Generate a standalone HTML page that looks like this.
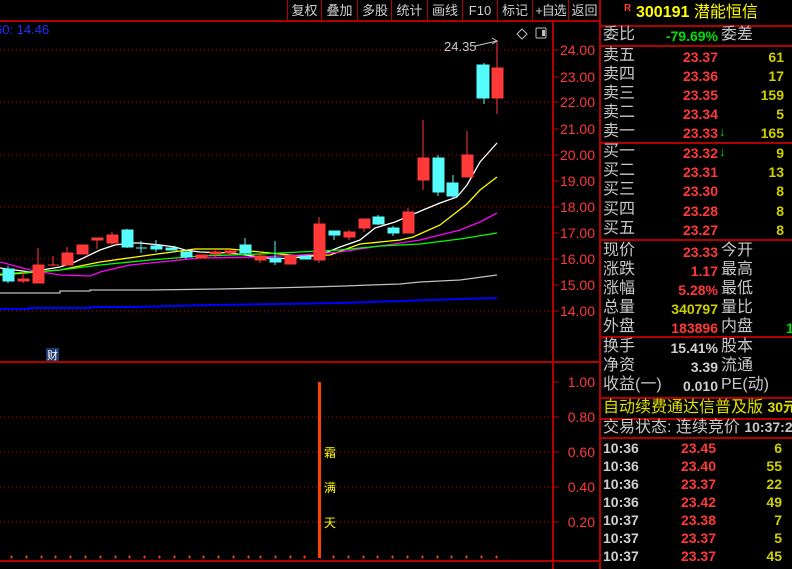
<!DOCTYPE html>
<html><head><meta charset="utf-8"><style>
*{margin:0;padding:0}
body{width:792px;height:569px;background:#000;overflow:hidden;position:relative;font-family:"Liberation Sans","WenQuanYi Zen Hei","Noto Sans CJK SC",sans-serif}
.a{position:absolute;white-space:nowrap;line-height:1}
.lb{color:#c8c8c8;font-size:16px}
.n{font-size:14px;font-weight:bold;text-align:right}
.r{color:#ff3838}.y{color:#d0d000}.g{color:#00e000}.w{color:#d0d0d0}
.tb{position:absolute;top:0;height:21px;border-left:1px solid #b00000;color:#d0d0d0;font-size:13px;line-height:21px;text-align:center;white-space:nowrap;overflow:hidden}
.hl{position:absolute;left:600px;width:192px;height:2px;background:#b00000}
</style></head><body>
<svg width="792" height="569" style="position:absolute;left:0;top:0">
<g stroke="#b00000">
<line x1="0" y1="21" x2="600" y2="21" stroke-width="2"/>
<line x1="553" y1="21" x2="553" y2="569" stroke-width="2"/>
<line x1="600" y1="0" x2="600" y2="569" stroke-width="2"/>
<line x1="0" y1="362" x2="600" y2="362" stroke-width="2"/>
<line x1="0" y1="561" x2="600" y2="561" stroke-width="2"/>
</g>
<g stroke="#c00000" stroke-dasharray="1,3">
<line x1="0" y1="50" x2="553" y2="50"/><line x1="0" y1="102" x2="553" y2="102"/>
<line x1="0" y1="155" x2="553" y2="155"/><line x1="0" y1="207" x2="553" y2="207"/>
<line x1="0" y1="259" x2="553" y2="259"/><line x1="0" y1="311" x2="553" y2="311"/>
<line x1="0" y1="417" x2="553" y2="417"/><line x1="0" y1="452" x2="553" y2="452"/>
<line x1="0" y1="487" x2="553" y2="487"/><line x1="0" y1="522" x2="553" y2="522"/>
</g>
<g stroke="#c00000">
<line x1="553" y1="50" x2="559" y2="50"/><line x1="553" y1="77" x2="559" y2="77"/><line x1="553" y1="102" x2="559" y2="102"/><line x1="553" y1="129" x2="559" y2="129"/><line x1="553" y1="155" x2="559" y2="155"/><line x1="553" y1="181" x2="559" y2="181"/><line x1="553" y1="207" x2="559" y2="207"/><line x1="553" y1="233" x2="559" y2="233"/><line x1="553" y1="259" x2="559" y2="259"/><line x1="553" y1="285" x2="559" y2="285"/><line x1="553" y1="311" x2="559" y2="311"/>
<line x1="553" y1="382" x2="559" y2="382"/><line x1="553" y1="417" x2="559" y2="417"/><line x1="553" y1="452" x2="559" y2="452"/><line x1="553" y1="487" x2="559" y2="487"/><line x1="553" y1="522" x2="559" y2="522"/>
</g>
<g fill="#ff3838" font-size="14" text-anchor="end" font-family="Liberation Sans">
<text x="595" y="55">24.00</text><text x="595" y="82">23.00</text><text x="595" y="107">22.00</text><text x="595" y="134">21.00</text><text x="595" y="160">20.00</text><text x="595" y="186">19.00</text><text x="595" y="212">18.00</text><text x="595" y="238">17.00</text><text x="595" y="264">16.00</text><text x="595" y="290">15.00</text><text x="595" y="316">14.00</text>
<text x="595" y="387">1.00</text><text x="595" y="422">0.80</text><text x="595" y="457">0.60</text><text x="595" y="492">0.40</text><text x="595" y="527">0.20</text>
</g>
<g fill="none" stroke-width="1.3">
<polyline stroke="#ffffff" points="0,268 30,272 60,267 75,262 100,250 115,245 130,243 140,243 160,245 175,247 185,250 200,252 230,253 245,255 260,257 275,259 290,258 305,257 320,255 340,247 360,240 375,228 395,222 423,210 440,203 457,197 467,185 480,162 497,143"/>
<polyline stroke="#ffff00" points="0,275 60,270 100,262 150,255 195,249 230,249 260,252 300,256 330,255 360,244 400,240 413,237 440,225 467,204 480,190 497,177"/>
<polyline stroke="#ff00ff" points="0,262 30,270 60,275 90,276 100,272 130,265 200,258 260,257 300,255 340,252 380,246 420,240 460,230 480,222 497,213"/>
<polyline stroke="#00ff00" points="0,274 60,270 100,265 150,260 200,256 260,254 300,252 340,250 380,246 420,244 460,239 497,233"/>
<polyline stroke="#c0c0c0" points="0,293 60,293 60,291 90,291 90,290 150,290 220,289 270,288 310,287 345,286 370,285 400,284 420,282 460,280 497,275"/>
<polyline stroke="#0000ff" stroke-width="2" points="0,309 30,309 30,308 90,308 90,307 135,307 210,305 280,304 340,303 400,301 430,300 460,299 497,298"/>
</g>
<g stroke-width="1">
<g stroke="#ff3838" fill="#ff3838">
<line x1="23" y1="272" x2="23" y2="283"/><rect x="18" y="279" width="11" height="2"/>
<line x1="38" y1="248" x2="38" y2="283"/><rect x="33" y="265" width="11" height="18"/>
<line x1="53" y1="256" x2="53" y2="266"/><line x1="48" y1="265" x2="59" y2="265"/>
<line x1="67" y1="247" x2="67" y2="265"/><rect x="62" y="253" width="11" height="12"/>
<rect x="77" y="245" width="11" height="9"/>
<line x1="97" y1="238" x2="97" y2="249"/><rect x="92" y="238" width="11" height="2"/>
<line x1="112" y1="232" x2="112" y2="245"/><rect x="107" y="235" width="11" height="8"/>
<rect x="196" y="255" width="11" height="3"/><line x1="215" y1="249" x2="215" y2="257"/><rect x="210" y="252" width="11" height="2"/>
<line x1="230" y1="249" x2="230" y2="256"/><rect x="225" y="251" width="11" height="2"/>
<line x1="260" y1="252" x2="260" y2="263"/><rect x="255" y="256" width="11" height="4"/>
<rect x="285" y="256" width="11" height="8"/>
<line x1="319" y1="217" x2="319" y2="263"/><rect x="314" y="224" width="11" height="36"/>
<line x1="349" y1="230" x2="349" y2="240"/><rect x="344" y="232" width="11" height="5"/>
<line x1="364" y1="219" x2="364" y2="232"/><rect x="359" y="219" width="11" height="9"/>
<line x1="408" y1="208" x2="408" y2="233"/><rect x="403" y="212" width="11" height="21"/>
<line x1="423" y1="120" x2="423" y2="190"/><rect x="418" y="158" width="11" height="22"/>
<line x1="467" y1="131" x2="467" y2="177"/><rect x="462" y="155" width="11" height="22"/>
<line x1="497" y1="41" x2="497" y2="114"/><rect x="492" y="68" width="11" height="30"/>
</g>
<g stroke="#54fcfc" fill="#54fcfc">
<line x1="8" y1="266" x2="8" y2="283"/><rect x="3" y="269" width="11" height="12"/>
<line x1="127" y1="229" x2="127" y2="248"/><rect x="122" y="230" width="11" height="17"/>
<line x1="141" y1="241" x2="141" y2="253"/><line x1="136" y1="248" x2="147" y2="248"/>
<line x1="156" y1="240" x2="156" y2="252"/><rect x="151" y="246" width="11" height="3"/>
<rect x="166" y="248" width="11" height="2"/>
<line x1="186" y1="250" x2="186" y2="259"/><rect x="181" y="252" width="11" height="5"/>
<line x1="245" y1="238" x2="245" y2="255"/><rect x="240" y="245" width="11" height="8"/>
<line x1="275" y1="241" x2="275" y2="265"/><rect x="270" y="258" width="11" height="4"/>
<rect x="300" y="256" width="11" height="3"/>
<line x1="334" y1="231" x2="334" y2="240"/><rect x="329" y="231" width="11" height="4"/>
<line x1="378" y1="215" x2="378" y2="225"/><rect x="373" y="217" width="11" height="7"/>
<line x1="393" y1="226" x2="393" y2="236"/><rect x="388" y="228" width="11" height="5"/>
<line x1="438" y1="155" x2="438" y2="196"/><rect x="433" y="158" width="11" height="34"/>
<line x1="453" y1="175" x2="453" y2="198"/><rect x="447" y="183" width="11" height="13"/>
<line x1="484" y1="63" x2="484" y2="104"/><rect x="477" y="65" width="12" height="33"/>
</g>
</g>
<text x="444" y="51" fill="#c8c8c8" font-size="13" font-family="Liberation Sans">24.35</text>
<polyline points="475,46 497,41" fill="none" stroke="#c8c8c8"/>
<path d="M492,38 L497,41 L492,44" fill="none" stroke="#c8c8c8"/>
<text x="-5" y="34" fill="#2030ff" font-size="13" font-family="Liberation Sans">60: 14.46</text>
<path d="M522,29 L527,34 L522,39 L517,34 Z" fill="none" stroke="#c0c0c0"/>
<rect x="536" y="28" width="10" height="10" fill="none" stroke="#c0c0c0" rx="1"/><rect x="542" y="30" width="3" height="6" fill="#c0c0c0"/>
<rect x="46" y="348" width="13" height="13" fill="#1a3a70"/>
<text x="47" y="359" fill="#fff" font-size="11" font-family="WenQuanYi Zen Hei">财</text>
<rect x="318" y="382" width="3" height="176" fill="#ff4000"/>
<g fill="#ffff00" font-size="12" font-family="WenQuanYi Zen Hei"><text x="324" y="457">霜</text><text x="324" y="492">满</text><text x="324" y="527">天</text></g>
<g stroke="#ff4000" stroke-width="1">
<path d="M10,557h3M11.5,555.5v3M25,557h3M26.5,555.5v3M40,557h3M41.5,555.5v3M54,557h3M55.5,555.5v3M69,557h3M70.5,555.5v3M84,557h3M85.5,555.5v3M99,557h3M100.5,555.5v3M114,557h3M115.5,555.5v3M128,557h3M129.5,555.5v3M143,557h3M144.5,555.5v3M158,557h3M159.5,555.5v3M173,557h3M174.5,555.5v3M188,557h3M189.5,555.5v3M202,557h3M203.5,555.5v3M217,557h3M218.5,555.5v3M232,557h3M233.5,555.5v3M247,557h3M248.5,555.5v3M259,557h3M260.5,555.5v3M274,557h3M275.5,555.5v3M289,557h3M290.5,555.5v3M303,557h3M304.5,555.5v3M332,557h3M333.5,555.5v3M347,557h3M348.5,555.5v3M362,557h3M363.5,555.5v3M376,557h3M377.5,555.5v3M391,557h3M392.5,555.5v3M406,557h3M407.5,555.5v3M421,557h3M422.5,555.5v3M436,557h3M437.5,555.5v3M450,557h3M451.5,555.5v3M465,557h3M466.5,555.5v3M480,557h3M481.5,555.5v3M495,557h3M496.5,555.5v3"/>
</g>
</svg>
<div class="tb" style="left:287px;width:33px">复权</div>
<div class="tb" style="left:321px;width:35px">叠加</div>
<div class="tb" style="left:357px;width:34px">多股</div>
<div class="tb" style="left:391px;width:35px">统计</div>
<div class="tb" style="left:427px;width:34px">画线</div>
<div class="tb" style="left:462px;width:34px">F10</div>
<div class="tb" style="left:497px;width:34px">标记</div>
<div class="tb" style="left:532px;width:35px;letter-spacing:-1px">+自选</div>
<div class="tb" style="left:568px;width:31px">返回</div>

<div class="hl" style="top:25px"></div><div class="hl" style="top:45px"></div><div class="hl" style="top:142px"></div><div class="hl" style="top:239px"></div><div class="hl" style="top:336px"></div><div class="hl" style="top:397px"></div><div class="hl" style="top:418px"></div><div class="hl" style="top:437px"></div>

<div class="a r" style="left:624px;top:4px;font-size:10px;font-weight:bold">R</div>
<div class="a" style="left:636px;top:5px;font-size:16px;font-weight:bold;color:#ffff00">300191 <span style="font-weight:normal">潜能恒信</span></div>

<div id="rp"></div>
<script>
var rows=[
[36,'委比','-79.69%','g','委差','',''],
[57,'卖五','23.37','r','','61','y'],[76,'卖四','23.36','r','','17','y'],[95,'卖三','23.35','r','','159','y'],[114,'卖二','23.34','r','','5','y'],[133,'卖一','23.33','r','↓','165','y'],
[153,'买一','23.32','r','↓','9','y'],[172,'买二','23.31','r','','13','y'],[191,'买三','23.30','r','','8','y'],[211,'买四','23.28','r','','8','y'],[230,'买五','23.27','r','','8','y'],
[252,'现价','23.33','r','今开','',''],[271,'涨跌','1.17','r','最高','',''],[290,'涨幅','5.28%','r','最低','',''],[309,'总量','340797','y','量比','',''],[328,'外盘','183896','r','内盘','1','g'],
[348,'换手','15.41%','w','股本','',''],[367,'净资','3.39','w','流通','',''],[386,'收益(一)','0.010','w','PE(动)','','']];
var h='';
rows.forEach(function(r){var t=r[0]-9;
h+='<div class="a lb" style="left:603px;top:'+t+'px">'+r[1]+'</div>';
h+='<div class="a n '+r[3]+'" style="left:640px;width:78px;top:'+(t+2)+'px">'+r[2]+'</div>';
if(r[4]=='↓')h+='<div class="a g" style="left:719px;top:'+(t+1)+'px;font-size:13px;font-weight:bold">↓</div>';
else if(r[4])h+='<div class="a lb" style="left:721px;top:'+t+'px">'+r[4]+'</div>';
if(r[5])h+='<div class="a n '+r[6]+'" style="left:730px;width:'+(r[5]=='1'&&r[6]=='g'?64:54)+'px;top:'+(t+2)+'px;'+(r[6]=='g'?'text-align:left;left:786px':'')+'">'+r[5]+'</div>';
});
h+='<div class="a" style="left:603px;top:400px;font-size:16px;color:#e0e000">自动续费通达信普及版 <b style="font-size:14px">30元</b></div>';
h+='<div class="a lb" style="left:603px;top:420px">交易状态: 连续竞价 <b style="font-size:14px">10:37:2</b></div>';
var tk=[['10:36','23.45','6'],['10:36','23.40','55'],['10:36','23.37','22'],['10:36','23.42','49'],['10:37','23.38','7'],['10:37','23.37','5'],['10:37','23.37','45']];
tk.forEach(function(k,i){var t=441+i*18;
h+='<div class="a n w" style="left:603px;top:'+t+'px;text-align:left">'+k[0]+'</div>';
h+='<div class="a n r" style="left:650px;width:66px;top:'+t+'px">'+k[1]+'</div>';
h+='<div class="a n y" style="left:730px;width:52px;top:'+t+'px">'+k[2]+'</div>';});
document.getElementById('rp').innerHTML=h;
</script>
</body></html>
